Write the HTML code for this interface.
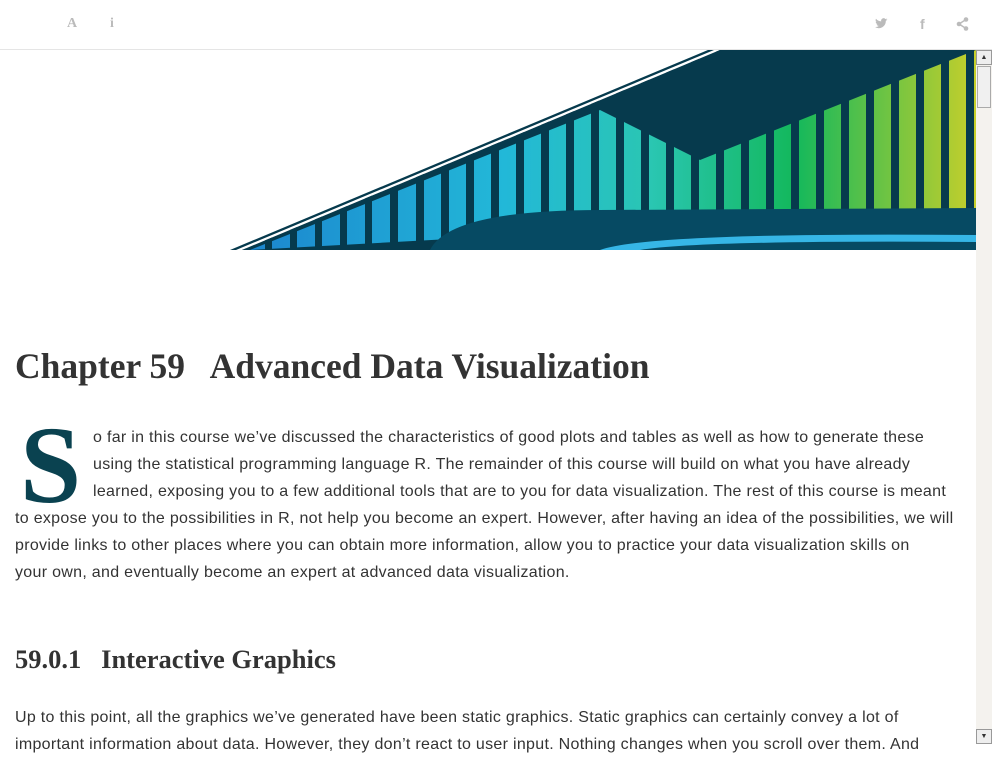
<!DOCTYPE html>
<html><head><meta charset="utf-8"><style>
*{margin:0;padding:0;box-sizing:border-box}
body{width:992px;height:744px;overflow:hidden;background:#fff;font-family:"Liberation Sans",sans-serif;color:#333;position:relative}
.top{position:absolute;left:0;top:0;width:992px;height:50px;border-bottom:1px solid #e5e5e5;background:#fff}
.ic{position:absolute;top:16px;color:#bbb;font-size:14px}
.sb{position:absolute;left:976px;top:50px;width:16px;height:694px;background:#f4f2ee}
.sb .th{position:absolute;left:1px;top:16px;width:14px;height:42px;background:#f0f0f0;border:1px solid #aaa}
.sb .ar{position:absolute;left:0;width:16px;height:15px;background:#eee;border:1px solid #999;font-size:7px;text-align:center;line-height:13px}
h1{position:absolute;left:15px;top:345px;font-family:"Liberation Serif",serif;font-size:35.5px;font-weight:bold;color:#333;white-space:nowrap}
h3{position:absolute;left:15px;top:644px;font-family:"Liberation Serif",serif;font-size:26.5px;font-weight:bold;color:#333;white-space:nowrap}
.l{position:absolute;white-space:nowrap;font-size:16px;letter-spacing:0.3px;line-height:27px;color:#333}
.cap{position:absolute;left:20px;top:410px;font-family:"Liberation Serif",serif;font-weight:bold;font-size:110px;line-height:110px;color:#0a4250}
</style></head><body>
<div class="top">
<span class="ic" style="left:67px;font-family:'Liberation Serif',serif;font-weight:bold">A</span>
<span class="ic" style="left:110px;font-family:'Liberation Serif',serif;font-weight:bold">i</span>
<svg style="position:absolute;left:875px;top:18px" width="13" height="12" viewBox="0 0 13 12"><path d="M12.5 1.5c-.5.2-1 .4-1.5.4.5-.3 1-.8 1.1-1.4-.5.3-1 .5-1.6.6A2.5 2.5 0 0 0 6.2 3.4 7 7 0 0 1 1 .8a2.5 2.5 0 0 0 .8 3.3c-.4 0-.8-.1-1.1-.3 0 1.2.9 2.2 2 2.4-.4.1-.8.1-1.1 0 .3 1 1.2 1.7 2.3 1.7A5 5 0 0 1 0 9a7 7 0 0 0 10.8-6.2c.7-.3 1.3-.8 1.7-1.3z" fill="#bbb"/></svg>
<span class="ic" style="left:920px;font-weight:bold">f</span>
<svg style="position:absolute;left:956px;top:17px" width="13" height="14" viewBox="0 0 13 14"><circle cx="10" cy="2.5" r="2.3" fill="#bbb"/><circle cx="3" cy="7" r="2.3" fill="#bbb"/><circle cx="10" cy="11.5" r="2.3" fill="#bbb"/><path d="M10 2.5L3 7L10 11.5" stroke="#bbb" stroke-width="1.5" fill="none"/></svg>
</div>
<svg style="position:absolute;left:0;top:50px" width="976" height="200" viewBox="0 0 976 200">
<defs><linearGradient id="g" x1="0" x2="1"><stop offset="0" stop-color="#1c86cf"/><stop offset=".35" stop-color="#22b8d8"/><stop offset=".55" stop-color="#2ac6b3"/><stop offset=".75" stop-color="#13b85c"/><stop offset="1" stop-color="#c6cf2b"/></linearGradient>
<clipPath id="c"><polygon points="242,200 720,0 976,0 976,200"/></clipPath></defs>
<polygon points="230,200 708,0 976,0 976,200" fill="#063a4d"/>
<polygon points="236,200 714,0 720,0 242,200" fill="#fff"/>
<g clip-path="url(#c)">
<path d="M250,200 L600,60 L700,110 L976,0 L976,160 L250,200Z" fill="url(#g)"/>
<g fill="#063a4d">
<rect x="240" y="0" width="6" height="200"/><rect x="265" y="0" width="7" height="200"/><rect x="290" y="0" width="7" height="200"/><rect x="315" y="0" width="7" height="200"/><rect x="340" y="0" width="7" height="200"/><rect x="365" y="0" width="7" height="200"/><rect x="390" y="0" width="8" height="200"/><rect x="416" y="0" width="8" height="200"/><rect x="441" y="0" width="8" height="200"/><rect x="466" y="0" width="8" height="200"/><rect x="491" y="0" width="8" height="200"/><rect x="516" y="0" width="8" height="200"/><rect x="541" y="0" width="8" height="200"/><rect x="566" y="0" width="8" height="200"/><rect x="591" y="0" width="8" height="200"/><rect x="616" y="0" width="8" height="200"/><rect x="641" y="0" width="8" height="200"/><rect x="666" y="0" width="8" height="200"/><rect x="691" y="0" width="8" height="200"/><rect x="716" y="0" width="8" height="200"/><rect x="741" y="0" width="8" height="200"/><rect x="766" y="0" width="8" height="200"/><rect x="791" y="0" width="8" height="200"/><rect x="816" y="0" width="8" height="200"/><rect x="841" y="0" width="8" height="200"/><rect x="866" y="0" width="8" height="200"/><rect x="891" y="0" width="8" height="200"/><rect x="916" y="0" width="8" height="200"/><rect x="941" y="0" width="8" height="200"/><rect x="966" y="0" width="8" height="200"/>
</g>
<path d="M430,200 Q450,160 600,160 L976,158 L976,200Z" fill="#064a63"/>
<path d="M600,200 Q650,182 976,185 L976,192 Q700,190 640,200Z" fill="#36b6e6"/>
</g>
</svg>
<div class="sb"><div class="ar" style="top:0">▲</div><div class="th"></div><div class="ar" style="bottom:0">▼</div></div>
<h1>Chapter 59&nbsp;&nbsp; Advanced Data Visualization</h1>
<div class="cap">S</div>
<div class="l" style="left:93px;top:424px">o far in this course we’ve discussed the characteristics of good plots and tables as well as how to generate these</div>
<div class="l" style="left:93px;top:451px">using the statistical programming language R. The remainder of this course will build on what you have already</div>
<div class="l" style="left:93px;top:478px">learned, exposing you to a few additional tools that are to you for data visualization. The rest of this course is meant</div>
<div class="l" style="left:15px;top:505px">to expose you to the possibilities in R, not help you become an expert. However, after having an idea of the possibilities, we will</div>
<div class="l" style="left:15px;top:532px">provide links to other places where you can obtain more information, allow you to practice your data visualization skills on</div>
<div class="l" style="left:15px;top:559px">your own, and eventually become an expert at advanced data visualization.</div>
<h3>59.0.1&nbsp;&nbsp; Interactive Graphics</h3>
<div class="l" style="left:15px;top:704px">Up to this point, all the graphics we’ve generated have been static graphics. Static graphics can certainly convey a lot of</div>
<div class="l" style="left:15px;top:731px">important information about data. However, they don’t react to user input. Nothing changes when you scroll over them. And</div>
</body></html>
